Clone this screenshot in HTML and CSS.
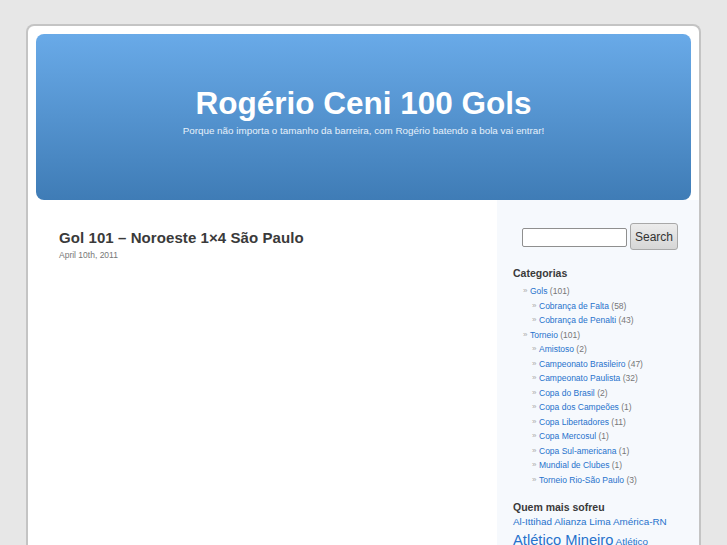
FILE: index.html
```html
<!DOCTYPE html>
<html lang="pt-BR">
<head>
  <meta charset="UTF-8" />
  <title>Rogério Ceni 100 Gols</title>
  <link rel="stylesheet" href="styles.css">
</head>
<body>
  <div class="page">
    <!-- header -->
    <div class="header">
      <h1 class="blog-title">Rogério Ceni 100 Gols</h1>
      <div class="blog-desc">Porque não importa o tamanho da barreira, com Rogério batendo a bola vai entrar!</div>
    </div>

    <div class="columns">
      <!-- post -->
      <div class="content">
        <h2 class="post-title">Gol 101 – Noroeste 1×4 São Paulo</h2>
        <div class="post-date">April 10th, 2011</div>
      </div>

      <!-- sidebar -->
      <div class="sidebar">
        <form class="search">
          <input class="search-input" type="text" />
          <button class="search-btn" type="button">Search</button>
        </form>

        <h3 class="widget-title">Categorias</h3>
        <ul class="cats">
          <li><a href="#">Gols</a> (101)
            <ul>
              <li><a href="#">Cobrança de Falta</a> (58)</li>
              <li><a href="#">Cobrança de Penalti</a> (43)</li>
            </ul>
          </li>
          <li><a href="#">Torneio</a> (101)
            <ul>
              <li><a href="#">Amistoso</a> (2)</li>
              <li><a href="#">Campeonato Brasileiro</a> (47)</li>
              <li><a href="#">Campeonato Paulista</a> (32)</li>
              <li><a href="#">Copa do Brasil</a> (2)</li>
              <li><a href="#">Copa dos Campeões</a> (1)</li>
              <li><a href="#">Copa Libertadores</a> (11)</li>
              <li><a href="#">Copa Mercosul</a> (1)</li>
              <li><a href="#">Copa Sul-americana</a> (1)</li>
              <li><a href="#">Mundial de Clubes</a> (1)</li>
              <li><a href="#">Torneio Rio-São Paulo</a> (3)</li>
            </ul>
          </li>
        </ul>

        <h3 class="widget-title tags-title">Quem mais sofreu</h3>
        <div class="tags">
          <a href="#">Al-Ittihad</a> <a href="#">Alianza Lima</a> <a href="#">América-RN</a>
          <a href="#" class="tag-big">Atlético Mineiro</a> <a href="#">Atlético</a>
        </div>
      </div>
    </div>
  </div>
</body>
</html>
```

FILE: styles.css
```css
* {
  margin: 0;
  padding: 0;
  box-sizing: border-box;
}

html, body {
  height: 100%;
  overflow: hidden;
}

body {
  font-family: 'Liberation Sans', Arial, sans-serif;
  background: #e7e7e7;
  color: #333;
  padding-top: 24px;
}

a {
  color: #2672cc;
  text-decoration: none;
}

/* outer white box */
.page {
  width: 675px;
  margin: 0 auto;
  background: #fff;
  border: 2px solid #c4c4c4;
  border-bottom: 0;
  border-radius: 8px 8px 0 0;
  padding-top: 8px;
}

/* blue header */
.header {
  width: 655px;
  height: 166px;
  margin-left: 8px;
  padding-top: 49px;
  border-radius: 8px;
  background: linear-gradient(#69aae8, #3f7cb6);
  color: #fff;
  text-align: center;
}

.blog-title {
  font-size: 31.5px;
  line-height: 40px;
  font-weight: 700;
}

.blog-desc {
  font-size: 9.85px;
  line-height: 14px;
  margin-top: 1px;
  color: #e6f0fa;
}

.columns {
  display: flex;
}

.content {
  width: 469px;
  padding: 28px 0 0 31px;
}

.post-title {
  font-size: 15px;
  line-height: 19px;
  font-weight: 700;
  letter-spacing: 0.08px;
  color: #3a3a3a;
}

.post-date {
  font-size: 8.5px;
  line-height: 12px;
  margin-top: 2px;
  color: #777;
}

/* sidebar */
.sidebar {
  width: 202px;
  padding: 0 0 60px 16px;
  background: #f6f9fd;
  font-size: 8.5px;
  color: #777;
}

.search {
  display: flex;
  align-items: center;
  gap: 3px;
  margin: 23px 0 0 9px;
}

.search-input {
  width: 105px;
  height: 19px;
  margin-top: 2px;
  background: #fff;
  border: 1px solid #8f8f8f;
  border-radius: 2px;
}

.search-btn {
  width: 48px;
  height: 27px;
  font-family: 'Liberation Sans', Arial, sans-serif;
  font-size: 12px;
  color: #333;
  background: linear-gradient(#ececec, #d6d6d6);
  border: 1px solid #a8a8a8;
  border-radius: 3px;
}

.widget-title {
  font-size: 10.5px;
  line-height: 14px;
  font-weight: 700;
  color: #3a3a3a;
  margin-top: 16px;
}

.cats {
  list-style: none;
  margin-top: 4px;
}

.cats li {
  line-height: 14.5px;
}

.cats > li {
  margin-left: 10px;
  padding-left: 7px;
  position: relative;
}

.cats ul {
  list-style: none;
}

.cats ul li {
  margin-left: 2px;
  padding-left: 7px;
  position: relative;
}

.cats li::before {
  content: "»";
  position: absolute;
  left: 0;
  color: #aaa;
  font-size: 8px;
}

.tags-title {
  margin-top: 13px;
}

.tags {
  font-size: 9.9px;
  line-height: 18px;
  width: 180px;
  margin-top: -1px;
}

.tag-big {
  font-size: 14.7px;
}
```
